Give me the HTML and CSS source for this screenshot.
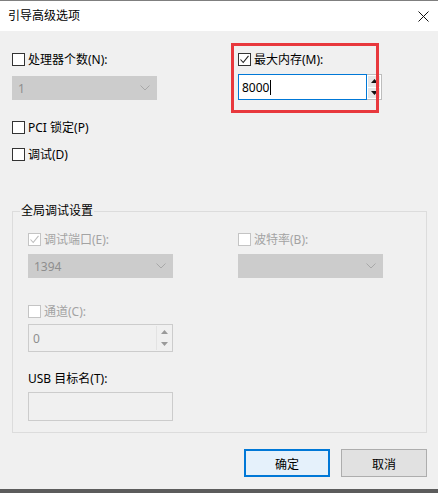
FILE: index.html
```html
<!DOCTYPE html>
<html lang="zh-CN">
<head>
<meta charset="utf-8">
<title>引导高级选项</title>
<link rel="stylesheet" href="styles.css">
</head>
<body>
<div class="window">
  <div class="titlebar">
    <span class="title">引导高级选项</span>
    <svg class="close" width="11" height="11" viewBox="0 0 11 11"><path d="M0.5 0.5 L10.5 10.5 M10.5 0.5 L0.5 10.5" stroke="#111" stroke-width="1" fill="none"/></svg>
  </div>
  <div class="main">
    <div class="top">
      <div class="col">
        <label class="row"><span class="cb"></span><span>处理器个数(N):</span></label>
        <div class="combo disabled gap10"><span>1</span><svg class="chev" width="10" height="6" viewBox="0 0 10 6"><path d="M0.5 0.5 L5 5 L9.5 0.5" stroke="#a8a8a8" fill="none"/></svg></div>
      </div>
      <div class="col">
        <label class="row"><span class="cb checked"><svg width="11" height="11" viewBox="0 0 11 11"><path d="M1.5 5.5 L4.2 8.5 L9.5 1.8" stroke="#222" stroke-width="1.1" fill="none"/></svg></span><span>最大内存(M):</span></label>
        <div class="spinwrap gap8">
          <div class="edit active"><span>8000</span><span class="caret"></span></div>
          <div class="spin">
            <span class="sbtn"><svg width="7" height="4" viewBox="0 0 7 4"><path d="M0 4 L3.5 0 L7 4 Z" fill="#111"/></svg></span>
            <span class="sbtn"><svg width="7" height="4" viewBox="0 0 7 4"><path d="M0 0 L3.5 4 L7 0 Z" fill="#111"/></svg></span>
          </div>
        </div>
      </div>
    </div>
    <label class="row pci"><span class="cb"></span><span>PCI 锁定(P)</span></label>
    <label class="row dbg"><span class="cb"></span><span>调试(D)</span></label>

    <div class="group">
      <div class="group-title">全局调试设置</div>
      <div class="grid">
        <div class="col">
          <label class="row dis"><span class="cb dcb"><svg width="11" height="11" viewBox="0 0 11 11"><path d="M1.5 5.5 L4.2 8.5 L9.5 1.8" stroke="#bdbdbd" stroke-width="1.1" fill="none"/></svg></span><span>调试端口(E):</span></label>
          <div class="combo disabled gap8"><span>1394</span><svg class="chev" width="10" height="6" viewBox="0 0 10 6"><path d="M0.5 0.5 L5 5 L9.5 0.5" stroke="#a8a8a8" fill="none"/></svg></div>
        </div>
        <div class="col">
          <label class="row dis"><span class="cb dcb"></span><span>波特率(B):</span></label>
          <div class="combo disabled gap8"><span></span><svg class="chev" width="10" height="6" viewBox="0 0 10 6"><path d="M0.5 0.5 L5 5 L9.5 0.5" stroke="#a8a8a8" fill="none"/></svg></div>
        </div>
      </div>
      <label class="row dis chan"><span class="cb dcb"></span><span>通道(C):</span></label>
      <div class="dedit spinbox">
        <span>0</span>
        <div class="dspin">
          <span class="sbtn"><svg width="7" height="4" viewBox="0 0 7 4"><path d="M0 4 L3.5 0 L7 4 Z" fill="#9a9a9a"/></svg></span>
          <span class="sbtn"><svg width="7" height="4" viewBox="0 0 7 4"><path d="M0 0 L3.5 4 L7 0 Z" fill="#9a9a9a"/></svg></span>
        </div>
      </div>
      <div class="usb-label">USB 目标名(T):</div>
      <div class="dedit usb"></div>
    </div>

    <div class="buttons">
      <button class="btn default">确定</button>
      <button class="btn">取消</button>
    </div>
  </div>
  <div class="bottombar"></div>
  <div class="highlight"></div>
</div>
</body>
</html>
```

FILE: styles.css
```css
* { box-sizing: border-box; }
html, body { margin: 0; padding: 0; }
body {
  width: 438px;
  height: 493px;
  overflow: hidden;
  background: #f0f0f0;
  font-family: "Noto Sans", "Noto Sans CJK SC", sans-serif;
  font-size: 12px;
  color: #000;
}
.window {
  position: relative;
  width: 438px;
  height: 493px;
  display: flex;
  flex-direction: column;
  border-top: 1px solid #7f7f7f;
}
.titlebar {
  height: 30px;
  background: #fff;
  display: flex;
  align-items: center;
  justify-content: space-between;
  padding: 0 9px 0 8px;
}
.title { line-height: 16px; font-size: 12px; color: #000; }
.close { margin-top: 1px; }
.main {
  flex: 1;
  padding: 0 11px 0 12px;
  display: flex;
  flex-direction: column;
}
.top {
  display: grid;
  grid-template-columns: 226px 1fr;
  padding-top: 22px;
}
.col { display: flex; flex-direction: column; align-items: flex-start; }
.row {
  display: flex;
  align-items: center;
  height: 13px;
  gap: 3px;
  line-height: 16px;
  white-space: nowrap;
}
.cb {
  width: 13px;
  height: 13px;
  border: 1px solid #333;
  background: #fff;
  display: flex;
  align-items: center;
  justify-content: center;
  flex: none;
}
.cb.checked { background: #fff; }
.dcb { border-color: #c4c4c4; background: #fff; }
.dis { color: #a3a3a3; }
.gap10 { margin-top: 10px; }
.gap8 { margin-top: 8px; }
.combo {
  width: 145px;
  height: 24px;
  display: flex;
  align-items: center;
  justify-content: space-between;
  padding: 0 6px 0 5px;
  background: #cccccc;
  border: 1px solid #cccccc;
  color: #8e8e8e;
}
.spinwrap {
  display: flex;
  height: 26px;
}
.edit {
  width: 129px;
  height: 26px;
  background: #fff;
  border: 1px solid #0078d7;
  display: flex;
  align-items: center;
  padding-left: 3px;
  color: #000;
}
.caret {
  display: inline-block;
  width: 1px;
  height: 15px;
  background: #000;
  margin-left: 1px;
}
.spin {
  width: 15px;
  height: 26px;
  border: 1px solid #bdbdbd;
  border-left: none;
  background: #fff;
  display: flex;
  flex-direction: column;
  padding: 1px;
  gap: 1px;
}
.sbtn {
  flex: 1;
  background: #e6e6e6;
  display: flex;
  align-items: center;
  justify-content: center;
}
.pci { margin-top: 21px; }
.dbg { margin-top: 14px; }
.group {
  margin-top: 50px;
  border: 1px solid #dcdcdc;
  padding: 0 15px 11px 15px;
  display: flex;
  flex-direction: column;
  align-items: flex-start;
}
.group-title {
  margin: -9px 0 0 -8px;
  padding: 0 1px;
  line-height: 16px;
  background: #f0f0f0;
}
.grid {
  display: grid;
  grid-template-columns: 210px 1fr;
  width: 100%;
  margin-top: 14px;
}
.chan { margin-top: 27px; }
.dedit {
  width: 145px;
  border: 1px solid #cccccc;
  background: #f0f0f0;
  color: #8e8e8e;
}
.spinbox {
  margin-top: 6px;
  height: 28px;
  display: flex;
  align-items: center;
  justify-content: space-between;
  padding: 0 1px 0 4px;
}
.dspin {
  width: 15px;
  height: 24px;
  display: flex;
  flex-direction: column;
  gap: 1px;
  border-left: 1px solid #e3e3e3;
}
.dspin .sbtn { background: #f0f0f0; }
.usb-label { margin-top: 19px; line-height: 16px; }
.usb { margin-top: 5px; height: 29px; }
.buttons {
  margin-top: 16px;
  display: flex;
  justify-content: flex-end;
  gap: 11px;
}
.btn {
  width: 86px;
  height: 28px;
  font-family: "Noto Sans CJK SC", sans-serif;
  font-size: 12px;
  color: #000;
  background: #e1e1e1;
  border: 1px solid #adadad;
  padding: 0;
}
.btn.default {
  background: #e5f1fb;
  border: 2px solid #0078d7;
}
.bottombar {
  height: 4px;
  background: #5c5c5c;
}
.highlight {
  position: absolute;
  left: 231px;
  top: 42px;
  width: 148px;
  height: 70px;
  border: 3px solid #e8383d;
  pointer-events: none;
}
```
